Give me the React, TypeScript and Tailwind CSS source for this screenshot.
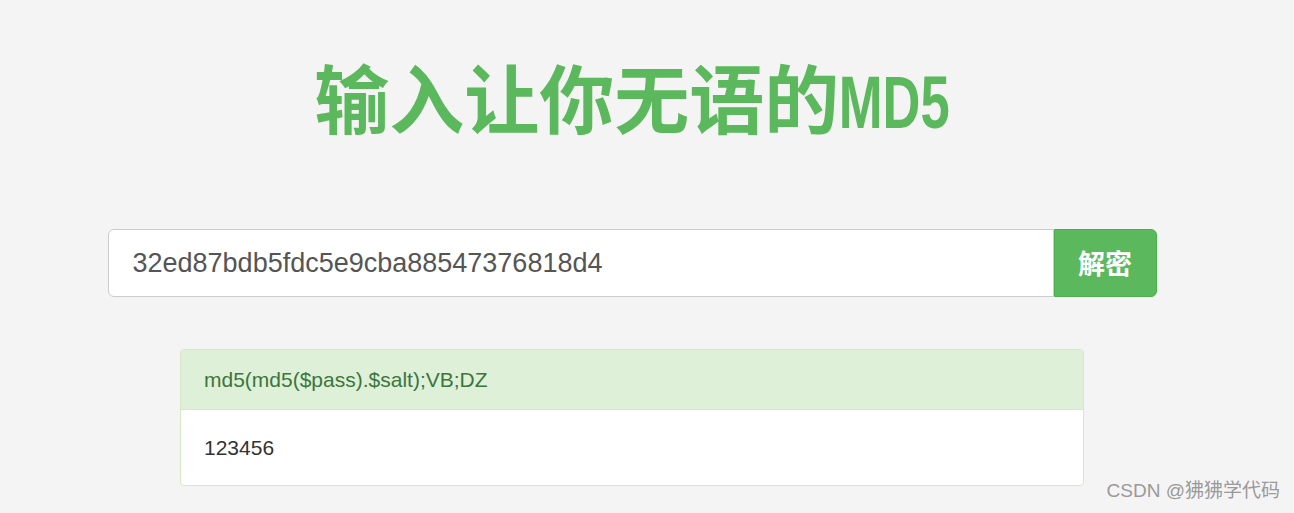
export default function App() {
  return (
    <div className="relative h-[513px] w-full overflow-hidden bg-[#f4f4f4] font-['Liberation_Sans','Noto_Sans_CJK_SC',sans-serif]">
      <div className="w-[1264px]">
        <h1 className="pt-[51px] text-center text-[75px] font-bold leading-[90px] text-[#5cb85c] font-['Noto_Sans_CJK_SC',sans-serif]">
          输入让你无语的<span className="-mx-[24px] inline-block scale-x-[0.7] font-['Liberation_Sans',sans-serif]">MD5</span>
        </h1>

        <div className="mx-auto mt-[82px] flex h-[68px] w-[1049px]">
          <div className="flex flex-1 items-center rounded-l-[6px] border border-[#cccccc] bg-white pl-[24px] text-[27px] text-[#555555]">
            32ed87bdb5fdc5e9cba88547376818d4
          </div>
          <button className="w-[103px] rounded-r-[6px] border border-[#4cae4c] bg-[#5cb85c] text-[27px] font-bold text-white font-['Noto_Sans_CJK_SC',sans-serif]">
            解密
          </button>
        </div>

        <div className="mx-auto mt-[52px] w-[904px] overflow-hidden rounded-[4px] border border-[#d6e9c6] bg-white">
          <div className="flex h-[60px] items-center border-b border-[#d6e9c6] bg-[#dff0d8] px-[23px] text-[21px] text-[#3c763d]">
            md5(md5($pass).$salt);VB;DZ
          </div>
          <div className="flex h-[75px] items-center px-[23px] text-[21px] text-[#333333]">123456</div>
        </div>
      </div>

      <div className="absolute bottom-[8px] right-[14px] text-[19px] text-[#9a9a9a]">CSDN @狒狒学代码</div>
    </div>
  );
}
